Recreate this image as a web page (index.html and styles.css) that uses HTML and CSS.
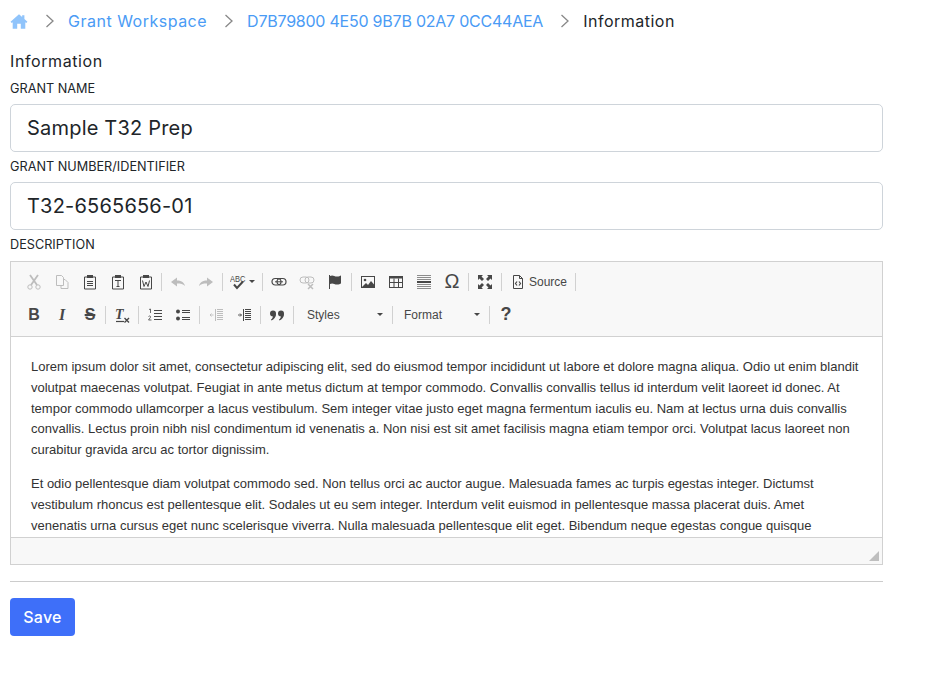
FILE: index.html
```html
<!DOCTYPE html>
<html lang="en">
<head>
    <meta charset="UTF-8">
    <meta name="viewport" content="width=device-width, initial-scale=1.0">
    <title>Information</title>
    <link rel="stylesheet" href="styles.css">
</head>
<body>
    <nav class="crumbs">
        <a class="home" href="#"><svg width="19" height="17" viewBox="0 0 20 18"><path fill="#90c4fb" d="M10 1 0.6 9.200 1.900 10.600 3 9.700V17h5v-5.500h4V17h5V9.700l1.100.9 1.300-1.400-3.400-3V2h-2.500v2z"/></svg></a>
        <svg class="chev" width="10" height="14" viewBox="0 0 10 14"><path d="M1.500 1 8 7l-6.500 6" fill="none" stroke="#888" stroke-width="1.300"/></svg>
        <a class="wide-text" href="#">Grant Workspace</a>
        <svg class="chev" width="10" height="14" viewBox="0 0 10 14"><path d="M1.500 1 8 7l-6.500 6" fill="none" stroke="#888" stroke-width="1.300"/></svg>
        <a class="id-text" href="#">D7B79800 4E50 9B7B 02A7 0CC44AEA</a>
        <svg class="chev" width="10" height="14" viewBox="0 0 10 14"><path d="M1.500 1 8 7l-6.500 6" fill="none" stroke="#888" stroke-width="1.300"/></svg>
        <span class="wide-text">Information</span>
    </nav>

    <main class="form">
        <h2>Information</h2>
        <label for="grantName">GRANT NAME</label>
        <input type="text" id="grantName" value="Sample T32 Prep">
        <label for="grantNumber">GRANT NUMBER/IDENTIFIER</label>
        <input type="text" id="grantNumber" value="T32-6565656-01">
        <label>DESCRIPTION</label>

        <div class="editor">
            <div class="toolbar">
                <div class="row">
                    <span class="btn off"><svg viewBox="0 0 16 16"><circle cx="4" cy="13" r="2.200"/><circle cx="12" cy="13" r="2.200"/><path d="M5 11 12 1M11 11 4 1" stroke-width="1.800"/></svg></span>
                    <span class="btn off"><svg viewBox="0 0 16 16"><path d="M2.500 1.500h5l2 2v8h-7zM9.500 5.500h1.500l3 3v6h-7v-3"/></svg></span>
                    <span class="btn"><svg viewBox="0 0 16 16"><path d="M5 3H2.500v12h11V3H11"/><rect class="fill" x="5" y="1" width="6" height="3"/><path d="M5 7.500h6M5 9.500h6M5 11.500h6"/></svg></span>
                    <span class="btn"><svg viewBox="0 0 16 16"><path d="M5 3H2.500v12h11V3H11"/><rect class="fill" x="5" y="1" width="6" height="3"/><path d="M5 6.500h6M8 6.500v6M6.500 12.500h3"/></svg></span>
                    <span class="btn"><svg viewBox="0 0 16 16"><path d="M5 3H2.500v12h11V3H11"/><rect class="fill" x="5" y="1" width="6" height="3"/><path d="M4.500 6.500 6 12.500 8 8l2 4.500 1.500-6"/></svg></span>
                    <i class="sep"></i>
                    <span class="btn off"><svg viewBox="0 0 16 16"><path class="fill" d="M1 8 7 3.500v3c4 0 7 1.500 8 5.500-2-2-4-2.500-8-2.500v3z"/></svg></span>
                    <span class="btn off"><svg viewBox="0 0 16 16"><path class="fill" d="M15 8 9 3.500v3c-4 0-7 1.500-8 5.500 2-2 4-2.500 8-2.500v3z"/></svg></span>
                    <i class="sep wide"></i>
                    <span class="btn spell"><svg viewBox="0 0 16 16"><text x="0.100" y="6.300" transform="scale(1 1.200)" class="abc">ABC</text><path d="M4 10.500 7 14l6-6.500" stroke-width="2"/></svg><b class="arrow"></b></span>
                    <i class="sep wide"></i>
                    <span class="btn"><svg viewBox="0 0 16 16"><rect x="1" y="4.500" width="9" height="6.500" rx="3.200" stroke-width="1.200"/><rect x="6" y="4.500" width="9" height="6.500" rx="3.200" stroke-width="1.200"/><path d="M4 7.800h8"/></svg></span>
                    <span class="btn off"><svg viewBox="0 0 16 16"><rect x="1" y="3" width="9" height="6" rx="3"/><rect x="6" y="3" width="9" height="6" rx="3"/><path d="M9 10l5 5M14 10l-5 5" stroke-width="1.500"/></svg></span>
                    <span class="btn"><svg viewBox="0 0 16 16"><path d="M2.500 1v14" stroke-width="1"/><path class="fill" d="M3 2c3-1.500 4 .5 7 .5 2 0 3-.5 4-1v8c-1 .5-2 1-4 1-3 0-4-2-7-.5z"/></svg></span>
                    <i class="sep wide"></i>
                    <span class="btn"><svg viewBox="0 0 16 16"><rect x="1.500" y="2.500" width="13" height="11"/><circle class="fill" cx="5" cy="6" r="1.300"/><path class="fill" d="M2 13l4-4 2 2 3-4 3.500 4v2z"/></svg></span>
                    <span class="btn"><svg viewBox="0 0 16 16"><rect x="1.500" y="2.500" width="13" height="11"/><rect class="fill" x="1.500" y="2.500" width="13" height="2"/><path d="M1.500 8.500h13M6 4.500v9M10.500 4.500v9"/></svg></span>
                    <span class="btn"><svg viewBox="0 0 16 16"><path class="thin" d="M1 1.500h14M1 3.500h14M1 5.500h14M1 10.500h14M1 12.500h14M1 14.500h14"/><path d="M1 8h14" stroke-width="2"/></svg></span>
                    <span class="btn omega">Ω</span>
                    <i class="sep wide"></i>
                    <span class="btn"><svg viewBox="0 0 16 16"><path class="fill" d="M1 1h5L4.500 2.500 7 5 5 7 2.500 4.500 1 6zM15 1v5l-1.500-1.500L11 7 9 5l2.500-2.500L10 1zM1 15v-5l1.500 1.500L5 9l2 2-2.500 2.500L6 15zM15 15h-5l1.500-1.500L9 11l2-2 2.500 2.500L15 10z"/></svg></span>
                    <i class="sep wide"></i>
                    <span class="btn source"><svg viewBox="0 0 16 16"><path d="M3.500 1.500h6l3 3v10h-9zM9.500 1.500v3h3"/><path d="M7 7.500 5.500 9.500 7 11.500M9 7.500l1.500 2-1.500 2" stroke-width="1.200"/></svg><em>Source</em></span>
                    <i class="sep wide"></i>
                </div>
                <div class="row">
                    <span class="btn glyph bold">B</span>
                    <span class="btn glyph italic">I</span>
                    <span class="btn glyph strike">S</span>
                    <i class="sep"></i>
                    <span class="btn"><svg viewBox="0 0 16 16"><text x="1" y="12" class="tx">T</text><path d="M2 14.500h8" stroke-width="1.200"/><path d="M10.500 11l4.500 4.500M15 11l-4.500 4.500" stroke-width="1.400"/></svg></span>
                    <i class="sep wide"></i>
                    <span class="btn"><svg viewBox="0 0 16 16"><path d="M7 3.500h8M7 6.500h8M7 9.500h8M7 12.500h8"/><path d="M2 2.500l1.500-.5v4M1.500 9.500c1-1 2.500-.5 2 .8L1.500 13H4.500" stroke-width=".8"/></svg></span>
                    <span class="btn"><svg viewBox="0 0 16 16"><circle class="fill" cx="3" cy="4.500" r="2"/><circle class="fill" cx="3" cy="11.500" r="2"/><path d="M7 3.500h8M7 5.500h8M7 10.500h8M7 12.500h8"/></svg></span>
                    <i class="sep wide"></i>
                    <span class="btn off"><svg viewBox="0 0 16 16"><path d="M9 2.500h6M9 4.500h6M9 6.500h6M9 8.500h6M9 10.500h6M9 12.500h6M7.500 2v12" stroke-width="1"/><path d="M2 8h3.500M3.500 6.500 2 8l1.500 1.500" stroke-width=".9"/></svg></span>
                    <span class="btn"><svg viewBox="0 0 16 16"><path d="M9 2.500h6M9 4.500h6M9 6.500h6M9 8.500h6M9 10.500h6M9 12.500h6M7.500 2v12" stroke-width="1"/><path d="M2 8h3.500M4 6.500 5.500 8 4 9.500" stroke-width=".9"/></svg></span>
                    <i class="sep wide"></i>
                    <span class="btn"><svg viewBox="0 0 16 16"><circle class="fill" cx="4" cy="6.500" r="3"/><circle class="fill" cx="12" cy="6.500" r="3"/><path class="fill" d="M7 7c0 3-2 5.500-4.500 6.500l-.5-1C3.500 11.500 4 10 4 8zM15 7c0 3-2 5.500-4.500 6.500l-.5-1c1.500-1 2-2.500 2-4.500z"/></svg></span>
                    <i class="sep wide"></i>
                    <span class="combo styles">Styles<b class="arrow"></b></span>
                    <i class="sep wide"></i>
                    <span class="combo format">Format<b class="arrow"></b></span>
                    <i class="sep wide"></i>
                    <span class="btn glyph help">?</span>
                </div>
            </div>
            <div class="content">
                <p>Lorem ipsum dolor sit amet, consectetur adipiscing elit, sed do eiusmod tempor incididunt ut labore et dolore magna aliqua. Odio ut enim blandit volutpat maecenas volutpat. Feugiat in ante metus dictum at tempor commodo. Convallis convallis tellus id interdum velit laoreet id donec. At tempor commodo ullamcorper a lacus vestibulum. Sem integer vitae justo eget magna fermentum iaculis eu. Nam at lectus urna duis convallis convallis. Lectus proin nibh nisl condimentum id venenatis a. Non nisi est sit amet facilisis magna etiam tempor orci. Volutpat lacus laoreet non curabitur gravida arcu ac tortor dignissim.</p>
                <p>Et odio pellentesque diam volutpat commodo sed. Non tellus orci ac auctor augue. Malesuada fames ac turpis egestas integer. Dictumst vestibulum rhoncus est pellentesque elit. Sodales ut eu sem integer. Interdum velit euismod in pellentesque massa placerat duis. Amet venenatis urna cursus eget nunc scelerisque viverra. Nulla malesuada pellentesque elit eget. Bibendum neque egestas congue quisque</p>
            </div>
            <div class="bottom"><span class="resize"></span></div>
        </div>

        <hr>
        <button type="button">Save</button>
    </main>
</body>
</html>
```

FILE: styles.css
```css
body {
    margin: 0;
    padding: 0 10px;
    background-color: #fff;
    color: #212529;
    font-family: Inter, "Open Sans", sans-serif;
}

.crumbs {
    display: flex;
    align-items: center;
    height: 42px;
    font-size: 16px;
}

.crumbs a {
    color: #4a9bf5;
    text-decoration: none;
}

.crumbs .home {
    display: flex;
    width: 18px;
}

.wide-text {
    letter-spacing: 0.5px;
}

.id-text {
    letter-spacing: -0.23px;
}

.chev {
    margin: 0 13px 0 17px;
}

.form {
    width: 873px;
}

h2 {
    margin: 0;
    padding-top: 9px;
    font-size: 16px;
    line-height: 20px;
    font-weight: 400;
    letter-spacing: 0.6px;
}

label {
    display: block;
    padding-top: 1px;
    margin-bottom: 7px;
    font-size: 12.700px;
    line-height: 16px;
}

h2 + label {
    margin-top: 9px;
}

input[type="text"] {
    display: block;
    box-sizing: border-box;
    width: 100%;
    height: 48px;
    padding: 0 16px;
    margin-bottom: 6px;
    border: 1px solid #ced4da;
    border-radius: 5px;
    font-family: inherit;
    font-size: 20px;
    letter-spacing: 0.2px;
    color: #212529;
}

.editor {
    margin-top: 8px;
    border: 1px solid #d1d1d1;
}

.toolbar {
    box-sizing: border-box;
    height: 75px;
    padding: 3px 9px 0;
    background-color: #f8f8f8;
    border-bottom: 1px solid #d1d1d1;
}

.row {
    display: flex;
    align-items: center;
    height: 33px;
}

.btn {
    display: flex;
    align-items: center;
    justify-content: center;
    flex: none;
    width: 28px;
    height: 26px;
    color: #474747;
}

.btn svg {
    width: 16px;
    height: 16px;
    fill: none;
    stroke: #474747;
    stroke-width: 1;
}

.btn svg .fill {
    fill: #474747;
    stroke: none;
}

.btn svg .thin {
    stroke: #8c8c8c;
}

.btn.off svg {
    stroke: #bdbdbd;
}

.btn.off svg .fill {
    fill: #bdbdbd;
}

.btn .abc {
    font: 400 7.500px "Liberation Sans", sans-serif;
    fill: #474747;
    stroke: none;
}

.btn .tx {
    font: italic 700 14px "Liberation Serif", serif;
    fill: #474747;
    stroke: none;
}

.sep {
    flex: none;
    width: 1px;
    height: 18px;
    margin: 0 2px 0 1px;
    background-color: #d1d1d1;
}

.sep.wide {
    margin-left: 2px;
}

.btn.spell {
    width: 35px;
    justify-content: flex-start;
    padding-left: 5px;
    box-sizing: border-box;
}

.arrow {
    display: inline-block;
    width: 0;
    height: 0;
    margin-left: 3px;
    border-left: 3px solid transparent;
    border-right: 3px solid transparent;
    border-top: 3px solid #474747;
}

.btn.omega {
    font: 400 20px "Liberation Sans", sans-serif;
}

.btn.source {
    width: 69px;
    justify-content: flex-start;
    padding-left: 6px;
    box-sizing: border-box;
}

.btn.source em {
    margin-left: 3px;
    font: 12px "Liberation Sans", sans-serif;
    color: #474747;
}

.glyph {
    font-size: 16px;
    font-family: "Liberation Sans", sans-serif;
    font-weight: 700;
}

.italic {
    font-family: "Liberation Serif", serif;
    font-style: italic;
}

.strike {
    text-decoration: line-through;
    text-decoration-thickness: 1.500px;
}

.help {
    font-size: 18px;
}

.combo {
    display: flex;
    align-items: center;
    justify-content: space-between;
    box-sizing: border-box;
    flex: none;
    padding-right: 7px;
    font: 12px "Liberation Sans", sans-serif;
    color: #474747;
}

.combo.styles {
    width: 94px;
    padding-left: 11px;
}

.combo.format {
    width: 92px;
    padding-left: 9px;
}

.content {
    box-sizing: border-box;
    height: 200px;
    padding: 20px 20px 0;
    overflow: hidden;
    font: 13px/20.800px "Liberation Sans", Arial, sans-serif;
    color: #333;
}

.content p {
    margin: 0 0 13px;
}

.bottom {
    position: relative;
    box-sizing: border-box;
    height: 27px;
    background-color: #f8f8f8;
    border-top: 1px solid #d1d1d1;
}

.resize {
    position: absolute;
    right: 3px;
    bottom: 3px;
    width: 0;
    height: 0;
    border-left: 10px solid transparent;
    border-bottom: 10px solid #bfbfbf;
}

hr {
    margin: 16px 0;
    border: 0;
    border-top: 1px solid #ccc;
}

button {
    width: 65px;
    height: 38px;
    border: none;
    border-radius: 4px;
    background-color: #3e6ff9;
    color: #fff;
    font-family: inherit;
    font-size: 16px;
    letter-spacing: 0.3px;
    font-weight: 500;
}
```
